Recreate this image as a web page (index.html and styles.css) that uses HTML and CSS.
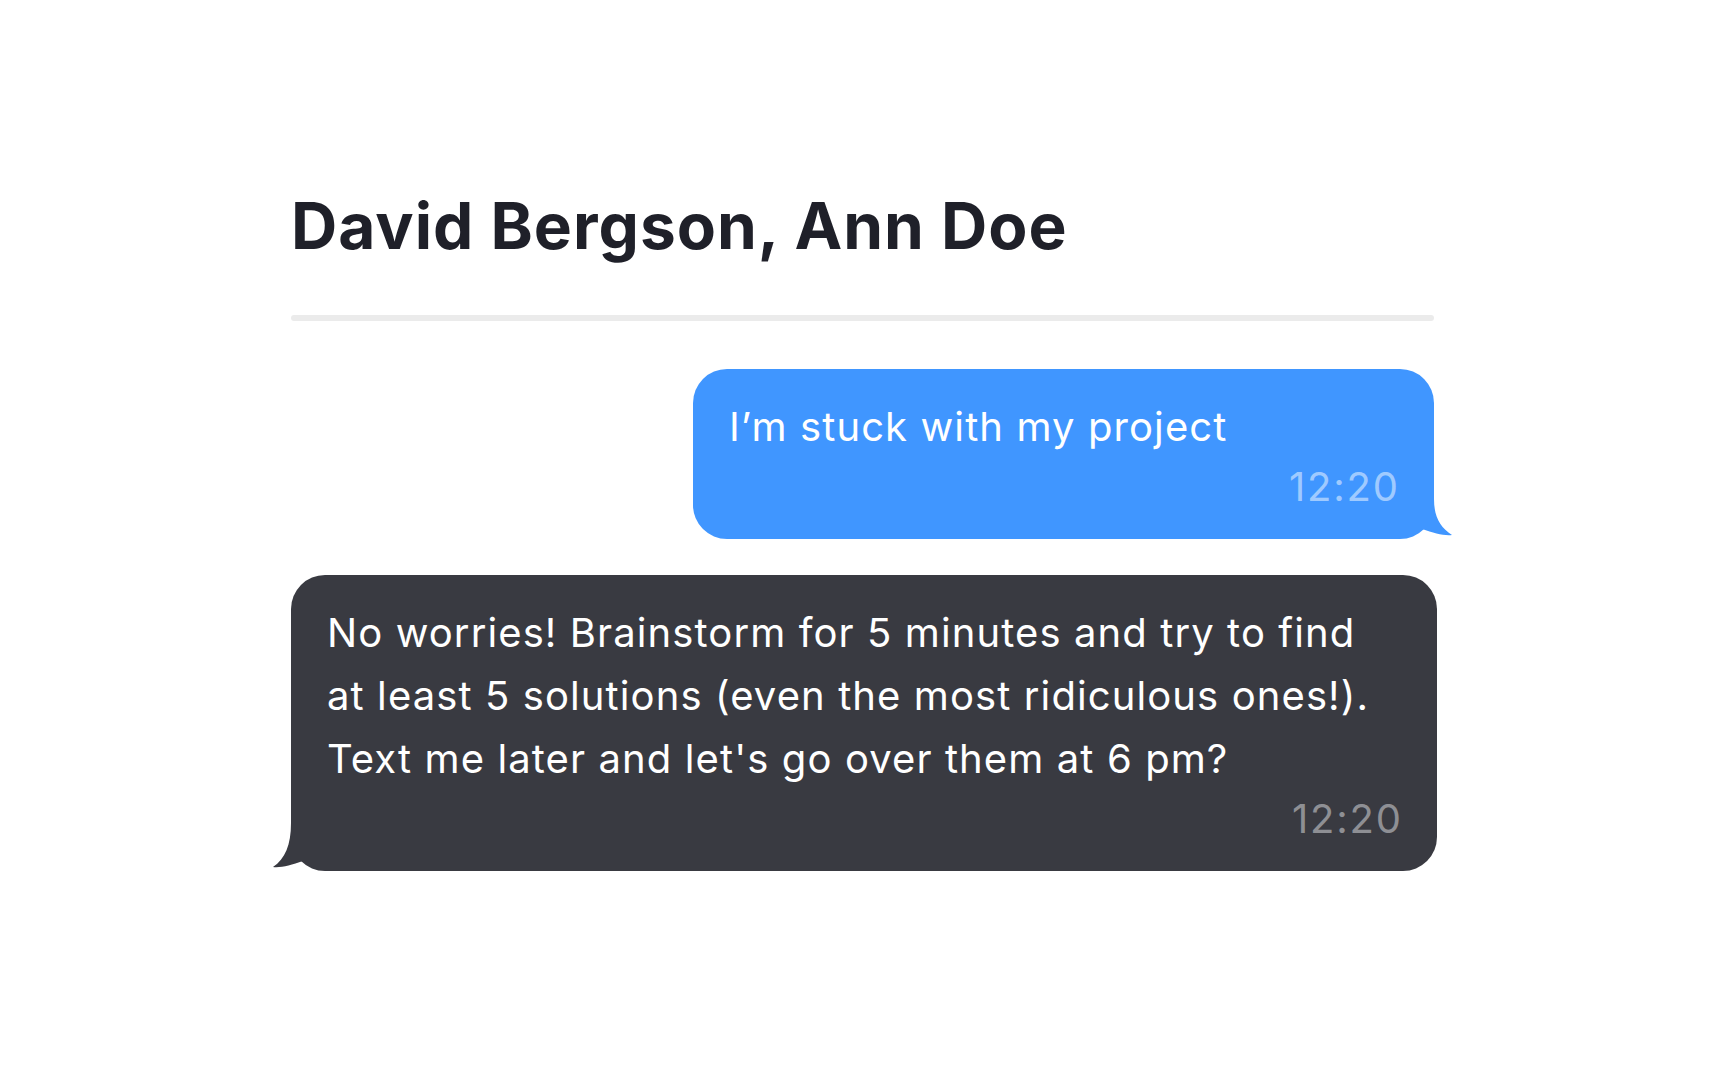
FILE: index.html
```html
<!DOCTYPE html>
<html lang="en">
<head>
<meta charset="utf-8">
<title>Chat</title>
<link rel="stylesheet" href="styles.css">
</head>
<body>
<main class="chat">
  <h1 class="chat-title">David Bergson, Ann Doe</h1>
  <div class="chat-divider"></div>
  <div class="messages">
    <div class="bubble bubble-out">
      <p class="bubble-text">I’m stuck with my project</p>
      <span class="bubble-time">12:20</span>
      <svg class="tail tail-out" width="32" height="48" viewBox="0 0 32 48" aria-hidden="true">
        <path d="M14 6 L14 8 C14 26 20 36 32 44 C24 45 14 42 2 38 L2 6 Z" fill="#4096ff"/>
      </svg>
    </div>
    <div class="bubble bubble-in">
      <p class="bubble-text">No worries! Brainstorm for 5 minutes and try to find at least 5 solutions (even the most ridiculous ones!). Text me later and let's go over them at 6 pm?</p>
      <span class="bubble-time">12:20</span>
      <svg class="tail tail-in" width="32" height="54" viewBox="0 0 32 54" aria-hidden="true">
        <path d="M18 4 L18 6 C18 28 12 42 0 50 C8 51 18 48 30 44 L30 4 Z" fill="#393a41"/>
      </svg>
    </div>
  </div>
</main>
</body>
</html>
```
FILE: styles.css
```css
html, body {
  margin: 0;
  padding: 0;
  background: #ffffff;
}

body {
  font-family: Inter, "Noto Sans", "Liberation Sans", sans-serif;
}

.chat {
  width: 1143px;
  padding: 188px 0 0 291px;
}

.chat-title {
  margin: 0;
  font-size: 64px;
  line-height: 76px;
  font-weight: 700;
  letter-spacing: 1px;
  color: #1f2029;
}

.chat-divider {
  margin-top: 51px;
  height: 6px;
  border-radius: 3px;
  background: #ebebeb;
}

.messages {
  margin-top: 48px;
  display: flex;
  flex-direction: column;
  gap: 36px;
}

.bubble {
  position: relative;
  box-sizing: border-box;
  padding: 26px 36px 21px;
  border-radius: 34px;
  color: #ffffff;
  font-size: 40px;
  line-height: 63px;
  letter-spacing: 1.1px;
}

.bubble-out {
  align-self: flex-end;
  width: 741px;
  background: #4096ff;
}

.bubble-in {
  align-self: flex-start;
  width: 1146px;
  background: #393a41;
}

.bubble-text {
  margin: 0;
}

.bubble-time {
  display: block;
  margin: -3px -1.8px 0 0;
  text-align: right;
  letter-spacing: 1.8px;
}

.bubble-out .bubble-time {
  color: rgba(255, 255, 255, 0.5);
}

.bubble-in .bubble-time {
  color: #8e8f94;
}

.tail {
  position: absolute;
  bottom: 0;
  display: block;
}

.tail-out {
  right: -18px;
}

.tail-in {
  left: -18px;
}
```
